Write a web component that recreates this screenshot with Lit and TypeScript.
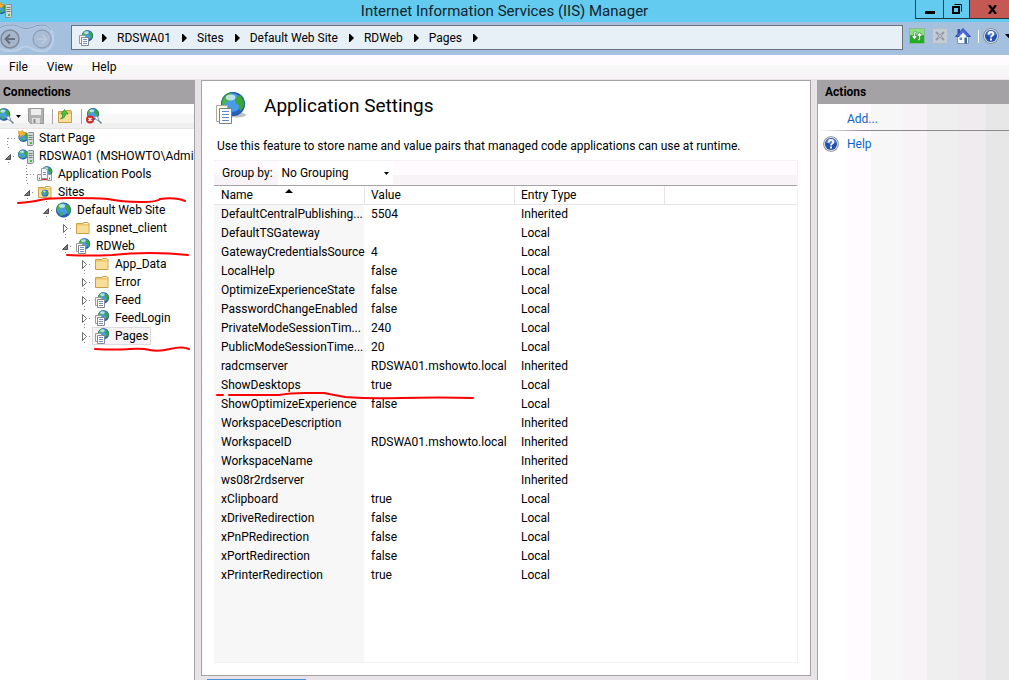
import { LitElement, html, css, svg, nothing } from "lit";
import { customElement, property, state } from "lit/decorators.js";
import { classMap } from "lit/directives/class-map.js";

type IconName =
  | "site" | "globe" | "folder" | "sites" | "pools" | "server" | "start"
  | "save" | "up" | "connect" | "disconnect" | "refresh" | "stop" | "home" | "help";

const globe = (cx: number, cy: number, r: number) => svg`
  <g transform="translate(${cx} ${cy}) scale(${r / 8})">
    <circle r="8" fill="#2462bd"/>
    <circle r="6.400" cx="-.8" cy="-1" fill="#4a9aec"/>
    <path d="M-7.400 -2.500Q-6 -6.800 -1.500 -7.800Q-.2 -6 -2 -4.400Q-2.200 -2 -4.400 -1.200Q-5 1 -7.600 .6Z" fill="#4cb843"/>
    <path d="M1.400 -3.200Q3 -6 5.200 -5.800Q7.400 -3.400 7.700 -.4Q6.800 3.400 4.800 4.600Q3.400 2.600 3.800 .6Q1 -.6 1.400 -3.200Z" fill="#38a836"/>
    <path d="M-4.600 2.200Q-1.400 1.600 -.6 3.800Q-1.200 6 -2.400 7Q-4.800 5.400 -4.600 2.200Z" fill="#43b143"/>
    <ellipse cx="-1.600" cy="-4.400" rx="3.200" ry="2" fill="#e2f4ff" opacity=".75"/>
    <circle r="7.600" fill="none" stroke="#1d4f95" stroke-width=".8" opacity=".5"/>
  </g>`;

const pages = svg`
  <path d="M1.500 5.500h6v8h-6z" fill="#fdfbf0" stroke="#9a9a96"/>
  <path d="M3.500 7.500h7v8h-7z" fill="#fff" stroke="#85878c"/>
  <path d="M5 9.500h4M5 11.500h4M5 13.500h4" stroke="#6c90c4"/>`;

const folder = svg`
  <path d="M1.500 3.500h6l1-1h4.500l1 1v10h-12.500z" fill="#edc566" stroke="#c9a04a"/>
  <path d="M2 5.500h11.500v7.500h-11.500z" fill="#f9de97"/>
  <path d="M9 3.500h4" stroke="#fff6d8"/>`;

const tower = svg`
  <path d="M9.500 3.500l1-1h5v12l-1 1h-5z" fill="#d4d7da" stroke="#8b8f95"/>
  <path d="M10.500 5.500h4M10.500 7.500h4M10.500 9.500h4" stroke="#7b8087"/>
  <path d="M12 12h2v2h-2z" fill="#37c437"/>`;

const helpDisc = svg`
  <circle cx="8" cy="8" r="7.800" fill="#7c828c"/>
  <circle cx="8" cy="8" r="7" fill="#dfe3e9"/>
  <circle cx="8" cy="8" r="6" fill="#2350ad"/>
  <path d="M3 6.500a5.300 5.300 0 0 1 10 0q-5 2.500-10 0z" fill="#6f9be2" opacity=".7"/>
  <path d="M5.700 6.500q0-2.500 2.300-2.500t2.300 2.100q0 1-1.200 1.700t-1.100 1.700" fill="none" stroke="#fff" stroke-width="1.800"/>
  <path d="M7 10.600h2v1.800h-2z" fill="#fff"/>`;

const plug = svg`
  <path d="M8.500 9.500l2-1.500 2.500 3-2 1.500z" fill="#eef2f4" stroke="#8fa0ab"/>
  <path d="M12 12l3.500 3.500" stroke="#7e919e" stroke-width="1.600"/>`;

const art: Record<IconName, unknown> = {
  site: svg`${globe(9.5, 5.8, 5.6)}${pages}`,
  globe: globe(7.5, 8, 7.5),
  folder,
  sites: svg`${folder}${globe(8, 9.2, 3.4)}`,
  pools: svg`${globe(10, 5.5, 5.3)}
    <path d="M4.500 2.500h4l2 2v8h-6z" fill="#f4f8fc" stroke="#8fa0b4"/>
    <path d="M6 6.500h3M6 8.500h3" stroke="#6c90c4"/>
    <path d="M.500 8.500h4v6h-4zM10.500 8.500h4v6h-4z" fill="#f2f2f2" stroke="#9a9a9a"/>
    <path d="M2 12.500h1M12 12.500h1M5 13.500h5" stroke="#c23b2e" stroke-width="1.500"/>`,
  server: svg`${globe(5, 6.5, 5)}${tower}`,
  start: svg`${globe(5.5, 7, 5)}
    <path d="M.3 1l2.500 .8 1.600-1.500 1 2 3 .3-1.600 2.200-3 .6-1.500 2-.6-2.600-1.500-1z" fill="#f7b733" stroke="#cf8a1e" stroke-width=".6"/>${tower}`,
  save: svg`
    <path d="M.500 .500h15v15h-13l-2-2z" fill="#b2b2b2" stroke="#979797"/>
    <path d="M3 1h10v6h-10z" fill="#ededed"/>
    <path d="M4 10h8v5.500h-8z" fill="#e0e0e0"/><path d="M5.500 11h2v4h-2z" fill="#8f8f8f"/>`,
  up: svg`
    <path d="M1.500 3.500h7l1-1h4.500l.5 1v11h-13z" fill="#edc566" stroke="#c9a04a"/>
    <path d="M2 6h12v8h-12z" fill="#f9de97"/>
    <path d="M3.500 11q2.500-1.500 2.300-5h-2l3.700-4.500 3.500 4.500h-2.200q-.8 4.500-5.300 5z" fill="#4cc23f" stroke="#258a1f" stroke-width=".7"/>`,
  connect: svg`${globe(6, 6.5, 6.2)}${plug}`,
  disconnect: svg`${globe(7, 6, 6)}${plug}
    <circle cx="4" cy="11.500" r="4" fill="#cf2a22"/><path d="M2.500 10l3 3M5.500 10l-3 3" stroke="#fff" stroke-width="1.300"/>`,
  refresh: svg`
    <path d="M.500 .500h15v15h-15z" fill="#1fb01f" stroke="#8fb79a"/>
    <path d="M1 1h14v6q-7 3-14 0z" fill="#8be07f"/>
    <path d="M6.500 3q-2.500 1-2 5h-2l3 4 3-4h-2q-.5-3 1-4zM9.500 13q2.500-1 2-5h2l-3-4-3 4h2q.5 3-1 4z" fill="#fff" stroke="#16781c" stroke-width=".6"/>`,
  stop: svg`
    <path d="M.500 .500h15v15h-15z" fill="#c6ccd6" stroke="#b3bccb"/>
    <path d="M4 4l8 8M12 4l-8 8" stroke="#949ba6" stroke-width="2.200"/>
    <path d="M6 6l4 4M10 6l-4 4" stroke="#b9bfca"/>`,
  home: svg`
    <path d="M2.500 8.500h11v7h-11z" fill="#f7f9fd" stroke="#8b94b5"/>
    <path d="M2.500 1h2.500v5h-2.500z" fill="#3a50a8"/>
    <path d="M8 .500l7.500 8h-15z" fill="#4a6be0" stroke="#27379a" stroke-width=".8"/>
    <path d="M8 4.500l4 4.500h-8z" fill="#f7f9fd"/>
    <path d="M4.500 9.500h2.500v2.500h-2.500z" fill="#5f86c9"/><path d="M9.500 9.500h2.500v6h-2.500z" fill="#2b6a9c"/>`,
  help: helpDisc,
};

const icon = (name: IconName) =>
  html`<svg class="icon" viewBox="0 0 16 16" width="16" height="16" aria-hidden="true">${art[name]}</svg>`;

const base = css`
  * { box-sizing: border-box; }
  button, select {
    font: inherit; color: inherit; background: none; border: 0; padding: 0; margin: 0;
    appearance: none; white-space: nowrap;
  }
  .icon { flex: none; display: block; }
  h2, h1, p, ul { margin: 0; padding: 0; }
  ul { list-style: none; }
`;

@customElement("address-bar")
class AddressBar extends LitElement {
  static styles = [base, css`
    :host { display: flex; align-items: center; height: 33px; background: #a5c0de; }
    .nav { width: 71px; flex: none; display: block; }
    .nav svg { display: block; }
    .path {
      flex: 1; min-width: 0; height: 25px; display: flex; align-items: center; gap: 10px;
      padding-left: 6px; border: 1px solid #69727c; background: #e7eff7; margin-bottom: 2px;
    }
    .path > .icon { margin-right: -2px; }
    .crumb { display: flex; align-items: center; gap: 11px; }
    .tools { display: flex; align-items: center; gap: 7px; padding-left: 6px; margin-bottom: 5px; flex: none; }
    .rule { width: 1px; height: 13px; background: #fff; }
    .help { display: flex; align-items: center; gap: 6px; margin-left: -3px; }
    .more { width: 4px; overflow: hidden; }
    .more svg { display: block; }
  `];

  render() {
    const arrow = html`<svg width="5" height="8" viewBox="0 0 5 8" aria-hidden="true"><path d="M0 0h1l4 4-4 4h-1z"/></svg>`;
    return html`
      <div class="nav">
        <svg width="54" height="29" viewBox="0 0 54 29" role="img" aria-label="Back and forward">
          <path d="M-6 14Q-4 1 10 1Q18 1 20 3.500Q26 6 32 3.500Q35 1 42 1Q53 2 53 14Q53 27 42 27Q34 27 31 24Q26 21 21 24Q18 27 10 27Q-4 27 -6 14Z" fill="#abc3df" stroke="#bccfe6" stroke-width="2"/>
          <path d="M-4 8Q0 1 10 1Q18 1 20 3.500Q26 6 32 3.500Q35 1 42 1Q48 1 51 6" fill="none" stroke="#8299b9"/>
          <circle cx="10" cy="15" r="9" fill="#a5b6cb" stroke="#7f8a99" stroke-width="1.500"/>
          <path d="M15 15h-9M10 10.500l-4.500 4.500 4.500 4.500" fill="none" stroke="#66707d" stroke-width="2"/>
          <circle cx="42" cy="15" r="9" fill="#a9bdd6" stroke="#8f9fb4" stroke-width="1.300"/>
          <path d="M37 15h9M42 10.500l4.500 4.500-4.500 4.500" fill="none" stroke="#bccbdd" stroke-width="1.500"/>
        </svg>
      </div>
      <div class="path">
        ${icon("site")}${arrow}
        ${["RDSWA01", "Sites", "Default Web Site", "RDWeb", "Pages"].map(
          (c) => html`<span class="crumb"><button>${c}</button>${arrow}</span>`)}
      </div>
      <div class="tools">
        <button aria-label="Refresh">${icon("refresh")}</button>
        <button aria-label="Stop">${icon("stop")}</button>
        <button aria-label="Home">${icon("home")}</button>
        <span class="rule"></span>
        <button class="help" aria-label="Help">${icon("help")}
          <span class="more"><svg width="7" height="4" viewBox="0 0 7 4"><path d="M0 0h7l-3.500 4z"/></svg></span>
        </button>
      </div>`;
  }
}

interface TreeNode { label: string; icon: IconName; level: number; open?: boolean; leaf?: boolean; selected?: boolean; }

const nodes: TreeNode[] = [
  { label: "Start Page", icon: "start", level: 0, leaf: true },
  { label: "RDSWA01 (MSHOWTO\\Admi", icon: "server", level: 0, open: true },
  { label: "Application Pools", icon: "pools", level: 1, leaf: true },
  { label: "Sites", icon: "sites", level: 1, open: true },
  { label: "Default Web Site", icon: "globe", level: 2, open: true },
  { label: "aspnet_client", icon: "folder", level: 3 },
  { label: "RDWeb", icon: "site", level: 3, open: true },
  { label: "App_Data", icon: "folder", level: 4 },
  { label: "Error", icon: "folder", level: 4 },
  { label: "Feed", icon: "site", level: 4 },
  { label: "FeedLogin", icon: "site", level: 4 },
  { label: "Pages", icon: "site", level: 4, selected: true },
];

@customElement("connections-pane")
class ConnectionsPane extends LitElement {
  static styles = [base, css`
    :host { display: flex; flex-direction: column; background: #fff; overflow: hidden; }
    h2 { height: 24px; line-height: 25px; padding-left: 3px; font-size: 12px; background: #a5a2a5; flex: none; }
    .tools {
      height: 25px; display: flex; align-items: center; gap: 7px; flex: none;
      background: linear-gradient(#fff 0 40%, #f7f7f7 40% 80%, #efefef 80%);
      border-bottom: 1px solid #e7e3e7;
    }
    .drop { display: flex; align-items: center; gap: 2px; margin-left: -2px; }
    .rule { width: 1px; height: 15px; background: #a5a2a5; margin-left: 1px; }
    .rule + button { margin-left: -3px; }
    .tree { position: relative; }
    li { height: 18px; display: flex; align-items: center; padding-left: 3px; white-space: nowrap; }
    .l1 { padding-left: 22px; }
    .l2 { padding-left: 41px; }
    .l3 { padding-left: 60px; }
    .l4 { padding-left: 79px; }
    .twist { width: 13px; height: 18px; flex: none; display: block; }
    .twist svg { display: block; }
    .item { display: flex; align-items: center; gap: 5px; height: 18px; padding: 0 2px 0 1px; border: 1px solid transparent; }
    .item.selected { background: #f7f3f7; border-color: #dedbde; }
    .ink { position: absolute; inset: 0 auto auto 0; pointer-events: none; }
  `];

  private twist(n: TreeNode) {
    const dots = (d: string) => svg`<path d=${d} stroke="#8a8a8a" stroke-dasharray="1 2" fill="none"/>`;
    return html`<svg width="13" height="18" viewBox="0 0 13 18" aria-hidden="true">
      ${n.leaf
        ? svg`${dots("M5 9.5h8")}${n.level ? dots("M4.500 0v18") : dots("M4.500 9v9")}`
        : svg`${dots("M10 9.5h3")}${dots("M5.500 0v3M5.500 15v3")}
            ${n.open
              ? svg`<path d="M7.500 7.500v5h-5z" fill="#7a7a7a" stroke="#333" stroke-width=".8"/>`
              : svg`<path d="M3.500 5.500v8l4-4z" fill="#fff" stroke="#6b6b6b"/>`}`}
    </svg>`;
  }

  render() {
    return html`
      <h2>Connections</h2>
      <div class="tools">
        <button class="drop" aria-label="Create new connection">${icon("connect")}
          <svg width="5" height="3" viewBox="0 0 5 3"><path d="M0 0h5l-2.500 3z"/></svg></button>
        <button aria-label="Save connections">${icon("save")}</button>
        <span class="rule"></span>
        <button aria-label="Up">${icon("up")}</button>
        <span class="rule"></span>
        <button aria-label="Delete connection">${icon("disconnect")}</button>
      </div>
      <div class="tree">
        <ul role="tree">
          ${nodes.map((n) => html`
            <li role="treeitem" class="l${n.level}" aria-expanded=${n.leaf ? nothing : String(!!n.open)}>
              <span class="twist">${this.twist(n)}</span>
              <button class=${classMap({ item: true, selected: !!n.selected })}>${icon(n.icon)}<span>${n.label}</span></button>
            </li>`)}
        </ul>
        <svg class="ink" width="194" height="230" viewBox="0 129 194 230" fill="none" stroke="#ff0000" stroke-width="2" stroke-linecap="round" aria-hidden="true">
          <path d="M18 203Q32 202 40 200T70 198Q95 198 108 199Q122 202 140 202T160 199Q176 197 185 201"/>
          <path d="M67 255Q90 256 112 255Q130 253 150 253T188 255"/>
          <path d="M95 349Q115 350 130 349Q142 348 150 350T170 349T189 349"/>
        </svg>
      </div>`;
  }
}

const settings: [string, string, string][] = [
  ["DefaultCentralPublishing...", "5504", "Inherited"],
  ["DefaultTSGateway", "", "Local"],
  ["GatewayCredentialsSource", "4", "Local"],
  ["LocalHelp", "false", "Local"],
  ["OptimizeExperienceState", "false", "Local"],
  ["PasswordChangeEnabled", "false", "Local"],
  ["PrivateModeSessionTim...", "240", "Local"],
  ["PublicModeSessionTime...", "20", "Local"],
  ["radcmserver", "RDSWA01.mshowto.local", "Inherited"],
  ["ShowDesktops", "true", "Local"],
  ["ShowOptimizeExperience", "false", "Local"],
  ["WorkspaceDescription", "", "Inherited"],
  ["WorkspaceID", "RDSWA01.mshowto.local", "Inherited"],
  ["WorkspaceName", "", "Inherited"],
  ["ws08r2rdserver", "", "Inherited"],
  ["xClipboard", "true", "Local"],
  ["xDriveRedirection", "false", "Local"],
  ["xPnPRedirection", "false", "Local"],
  ["xPortRedirection", "false", "Local"],
  ["xPrinterRedirection", "true", "Local"],
];

@customElement("settings-pane")
class SettingsPane extends LitElement {
  @state() private grouping = "No Grouping";

  static styles = [base, css`
    :host {
      display: flex; flex-direction: column; background: #fff;
      border: 1px solid #a5a2a5; padding: 10px 12px 12px;
    }
    .head { display: flex; align-items: center; gap: 18px; height: 34px; padding-left: 2px; }
    .head svg { flex: none; }
    h1 { font-size: 19px; font-weight: 400; line-height: 26px; margin-bottom: 4px; }
    p { padding-left: 3px; margin: 13px 0 6px; line-height: 16px; white-space: nowrap; }
    .frame { flex: 1; display: flex; flex-direction: column; border: 1px solid #f3f1f3; border-left: 0; min-height: 0; }
    .group {
      display: flex; align-items: center; height: 25px; padding-left: 8px; gap: 5px; flex: none;
      background: linear-gradient(#fffbff 0 60%, #f7f3f7 60%); border-bottom: 1px solid #a5a2a5;
    }
    .pick { position: relative; width: 115px; height: 100%; background: #fff; flex: none; }
    select { width: 100%; height: 100%; padding-left: 4px; }
    .pick svg { position: absolute; right: 4px; top: 11px; pointer-events: none; }
    .list {
      flex: 1; position: relative; overflow: hidden;
      background: linear-gradient(90deg, #f7f7f7 0 150px, #fff 150px);
    }
    table { border-collapse: separate; border-spacing: 0; table-layout: fixed; width: 100%; }
    .c1 { width: 151px; } .c2 { width: 150px; } .c3 { width: 150px; }
    th { height: 19px; padding: 0 0 0 6px; text-align: left; font-weight: 400; line-height: 18px; background: #fff;
      border-right: 1px solid #e7e3e7; border-bottom: 1px solid #e7e3e7; position: relative; }
    th:last-child { border-right: 0; }
    th:first-child, td:first-child { padding-left: 7px; }
    td { height: 19px; padding: 0 0 0 6px; line-height: 19px; white-space: nowrap; }
    .sort { position: absolute; left: 71px; top: 3px; }
    .ink { position: absolute; inset: 0 auto auto 0; pointer-events: none; }
  `];

  render() {
    return html`
      <div class="head">
        <svg width="30" height="34" viewBox="0 0 30 34" aria-hidden="true">
          <ellipse cx="20" cy="24" rx="10" ry="2.500" fill="#000" opacity=".25"/>
          ${globe(17, 13, 12)}
          <path d="M.500 14.500h11v16h-11z" fill="#fbf9ea" stroke="#a9a9a2"/>
          <path d="M3.500 17.500h12v15h-12z" fill="#fff" stroke="#7c7f84"/>
          <path d="M6 20.500h7M6 23.500h7M6 26.500h7M6 29.500h7" stroke="#5a86c2"/>
        </svg>
        <h1>Application Settings</h1>
      </div>
      <p>Use this feature to store name and value pairs that managed code applications can use at runtime.</p>
      <div class="frame">
        <div class="group">
          <label for="grouping">Group by:</label>
          <span class="pick">
            <select id="grouping" .value=${this.grouping}
              @change=${(e: Event) => (this.grouping = (e.target as HTMLSelectElement).value)}>
              <option>No Grouping</option><option>Entry Type</option>
            </select>
            <svg width="5" height="3" viewBox="0 0 5 3" aria-hidden="true"><path d="M0 0h5l-2.500 3z"/></svg>
          </span>
        </div>
        <div class="list">
          <table>
            <colgroup><col class="c1"><col class="c2"><col class="c3"><col></colgroup>
            <thead><tr>
              <th>Name<svg class="sort" width="8" height="4" viewBox="0 0 8 4"><path d="M0 4h8l-4-4z"/></svg></th>
              <th>Value</th><th>Entry Type</th><th></th>
            </tr></thead>
            <tbody>${settings.map(([n, v, t]) => html`<tr><td>${n}</td><td>${v}</td><td>${t}</td><td></td></tr>`)}</tbody>
          </table>
          <svg class="ink" width="270" height="240" viewBox="214 186 270 240" fill="none" stroke="#ff0000" stroke-width="2" stroke-linecap="round" aria-hidden="true">
            <path d="M217 395h6M229 395h50Q290 393 305 393H324Q334 395 345 397Q370 399 400 398Q440 397 473 398"/>
          </svg>
        </div>
      </div>`;
  }
}

@customElement("actions-pane")
class ActionsPane extends LitElement {
  static styles = [base, css`
    :host {
      display: flex; flex-direction: column; border-left: 1px solid #a5a2a5;
      background: linear-gradient(90deg, #fff 0 15%, #fffbff 15% 28%, #f7f7f7 28% 44%, #f7f3f7 44% 57%,
        #efefef 57% 73%, #efebef 73% 88%, #e7e7e7 88%);
    }
    h2 { height: 24px; line-height: 25px; padding-left: 7px; font-size: 12px; background: #a5a2a5; }
    a { color: #0a63c9; text-decoration: none; display: flex; align-items: center; height: 26px; }
    .add { padding: 4px 0 0 29px; }
    .help { gap: 8px; padding-left: 5px; }
    hr { border: 0; height: 1px; margin: 0; background: linear-gradient(90deg, transparent, #8c8a8c 25%); }
  `];
  render() {
    return html`
      <h2>Actions</h2>
      <a class="add" href="#add">Add...</a>
      <hr>
      <a class="help" href="#help">${icon("help")}<span>Help</span></a>`;
  }
}

@customElement("app-root")
class AppRoot extends LitElement {
  @property() heading = "Internet Information Services (IIS) Manager";

  static styles = [base, css`
    :host {
      display: flex; flex-direction: column; height: 100vh; overflow: hidden;
      font: 12px/16px Roboto, sans-serif; color: #000; background: #e7e3e7;
    }
    .title { display: flex; justify-content: space-between; height: 22px; background: #63cbef; flex: none; }
    .title .logo { margin: 2px 0 0 -4px; }
    .title h1 { flex: 1; text-align: center; font-size: 15px; font-weight: 400; line-height: 22px; padding-left: 82px; color: #10242e; }
    .win { display: flex; height: 19px; }
    .win button { display: flex; align-items: center; justify-content: center; border: 1px solid #1f3640; border-top: 0; border-right: 0; }
    .win .min { width: 28px; } .win .max { width: 26px; }
    .win .close { width: 40px; background: #c55852; padding-left: 5px; }
    .menu {
      display: flex; gap: 19px; height: 25px; padding-left: 9px; align-items: center; flex: none;
      background: linear-gradient(#fffbff 0 40%, #f7f7f7 40% 80%, #f7f3f7 80%); border-bottom: 1px solid #e7e3e7;
    }
    main { flex: 1; min-height: 0; display: grid; grid-template-columns: 194px minmax(0, 1fr) 192px; }
    .center { border-left: 1px solid #a5a2a5; padding: 0 6px 0 6px; display: flex; flex-direction: column; min-height: 0; }
    settings-pane { flex: 1; min-height: 0; }
    .tabs { height: 4px; padding: 3px 0 0 6px; flex: none; }
    .tab { width: 99px; height: 1px; background: #4a92e0; }
  `];

  render() {
    return html`
      <header class="title">
        <span class="logo">${icon("start")}</span>
        <h1>${this.heading}</h1>
        <div class="win">
          <button class="min" aria-label="Minimize"><svg width="10" height="12" viewBox="0 0 10 12"><path d="M0 8h10v3H0z"/></svg></button>
          <button class="max" aria-label="Restore"><svg width="10" height="10" viewBox="0 0 10 10" fill="none" stroke="#000"><path d="M1 3h6v6H1z" stroke-width="2"/><path d="M2.500 .500h7v7"/></svg></button>
          <button class="close" aria-label="Close"><svg width="9" height="9" viewBox="0 0 9 9"><path d="M1 0l7 9M8 0l-7 9" stroke="#000" stroke-width="2.200"/></svg></button>
        </div>
      </header>
      <address-bar></address-bar>
      <nav class="menu"><button>File</button><button>View</button><button>Help</button></nav>
      <main>
        <connections-pane></connections-pane>
        <section class="center">
          <settings-pane></settings-pane>
          <div class="tabs"><div class="tab"></div></div>
        </section>
        <actions-pane></actions-pane>
      </main>`;
  }
}
